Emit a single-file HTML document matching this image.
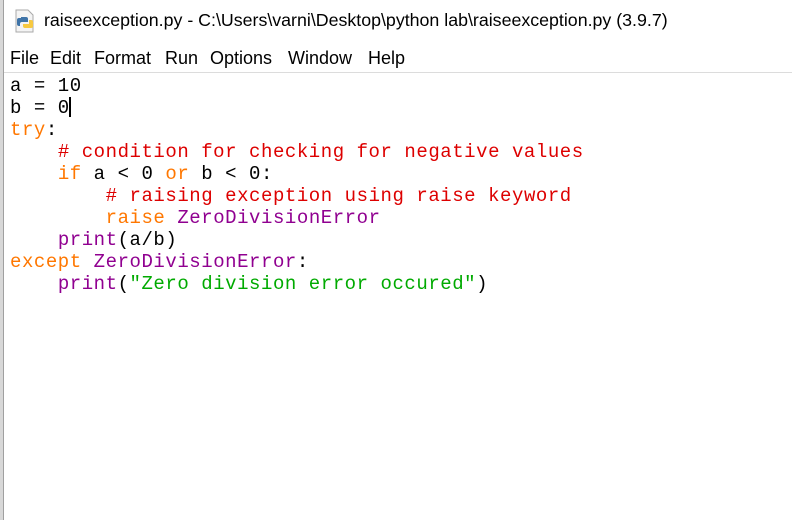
<!DOCTYPE html>
<html><head><style>
body{margin:0;width:792px;height:520px;background:#fff;position:relative;overflow:hidden;font-family:"Liberation Sans",sans-serif}
.lb{position:absolute;left:0;top:0;width:3px;height:520px;background:#d8d8d8}
.lb2{position:absolute;left:3px;top:0;width:1px;height:520px;background:#a0a0a0}
.title{position:absolute;left:44px;top:10px;font-size:17.8px;color:#000;white-space:nowrap}
.m{position:absolute;top:48px;font-size:18px;color:#000;white-space:nowrap}
.sep{position:absolute;left:4px;top:72px;width:788px;height:1px;background:#dcdcdc}
pre{position:absolute;left:10px;top:75px;margin:0;font-family:"Liberation Mono",monospace;font-size:19px;letter-spacing:0.55px;line-height:22px;color:#000}
.k{color:#ff7700}.c{color:#dd0000}.b{color:#900090}.s{color:#00aa00}
.cur{display:inline-block;width:2px;height:20px;background:#000;vertical-align:-4px;margin-left:-1px}
</style></head><body>
<div class="lb"></div><div class="lb2"></div>
<svg style="position:absolute;left:14px;top:9px" width="22" height="24" viewBox="0 0 22 24">
<path d="M2 1h12l5 5v17H2z" fill="#f4f4f4" stroke="#aaa"/>
<path d="M7 8h5a2 2 0 0 1 2 2v3H8a2 2 0 0 0-2 2v2H5a2 2 0 0 1-2-2v-4a2 2 0 0 1 2-2h2z" fill="#3f74a8"/>
<path d="M15 11h2a2 2 0 0 1 2 2v4a2 2 0 0 1-2 2h-6a2 2 0 0 1-2-2v-2h6z" fill="#f7c940"/>
</svg>
<div class="title">raiseexception.py - C:\Users\varni\Desktop\python lab\raiseexception.py (3.9.7)</div>
<div class="m" style="left:10px">File</div>
<div class="m" style="left:50px">Edit</div>
<div class="m" style="left:94px">Format</div>
<div class="m" style="left:165px">Run</div>
<div class="m" style="left:210px">Options</div>
<div class="m" style="left:288px">Window</div>
<div class="m" style="left:368px">Help</div>
<div class="sep"></div>
<pre>a = 10
b = 0<span class="cur"></span>
<span class="k">try</span>:
    <span class="c"># condition for checking for negative values</span>
    <span class="k">if</span> a &lt; 0 <span class="k">or</span> b &lt; 0:
        <span class="c"># raising exception using raise keyword</span>
        <span class="k">raise</span> <span class="b">ZeroDivisionError</span>
    <span class="b">print</span>(a/b)
<span class="k">except</span> <span class="b">ZeroDivisionError</span>:
    <span class="b">print</span>(<span class="s">"Zero division error occured"</span>)</pre>
</body></html>
